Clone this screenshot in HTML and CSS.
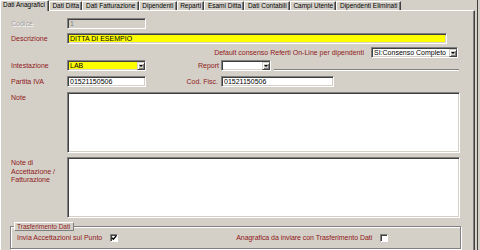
FILE: index.html
```html
<!DOCTYPE html>
<html lang="it">
<head>
  <meta charset="UTF-8" />
  <title>Anagrafica Ditta</title>
  <link rel="stylesheet" href="styles.css">
</head>
<body>
  <div class="window">
    <ul class="tabs">
      <li class="active">Dati Anagrafici</li>
      <li>Dati Ditta</li>
      <li>Dati Fatturazione</li>
      <li>Dipendenti</li>
      <li>Reparti</li>
      <li>Esami Ditta</li>
      <li>Dati Contabili</li>
      <li>Campi Utente</li>
      <li>Dipendenti Eliminati</li>
    </ul>

    <div class="panel">
      <div class="row">
        <span class="lbl off">Codice</span>
        <input class="field off w79" value="1" disabled>
      </div>

      <div class="row gap4">
        <span class="lbl">Descrizione</span>
        <input class="field yellow w380" value="DITTA DI ESEMPIO">
      </div>

      <div class="row gap3 right">
        <span class="lbl-inline">Default consenso Referti On-Line per dipendenti</span>
        <div class="field select w87"><span>SI:Consenso Completo</span><span class="arrow"></span></div>
      </div>

      <div class="row gap2">
        <span class="lbl">Intestazione</span>
        <div class="field select yellow w79"><span>LAB</span><span class="arrow"></span></div>
        <span class="lbl2">Report</span>
        <div class="field select w50"><span></span><span class="arrow"></span></div>
        <span class="sep"></span>
      </div>

      <div class="row gap5">
        <span class="lbl">Partita IVA</span>
        <input class="field w79" value="01521150506">
        <span class="lbl2 cf">Cod. Fisc.</span>
        <input class="field w113" value="01521150506">
      </div>

      <div class="row tall gap5">
        <span class="lbl">Note</span>
        <textarea class="field area"></textarea>
      </div>

      <div class="row tall gap4">
        <span class="lbl">Note di Accettazione / Fatturazione</span>
        <textarea class="field area"></textarea>
      </div>

      <fieldset class="group">
        <legend>Trasferimento Dati</legend>
        <div class="group-row">
          <span class="lbl-g">Invia Accettazioni sul Punto</span>
          <span class="check">
            <svg width="6" height="6" viewBox="0 0 6 6"><polyline points="0.8,2.6 2.3,4.2 5.2,1" fill="none" stroke="#000" stroke-width="1.3"/></svg>
          </span>
          <span class="lbl-g far">Anagrafica da inviare con Trasferimento Dati</span>
          <span class="check"></span>
        </div>
      </fieldset>
    </div>
  </div>
</body>
</html>
```

FILE: styles.css
```css
* {
  box-sizing: border-box;
  margin: 0;
  padding: 0;
}

body {
  font-family: "Liberation Sans", Arial, sans-serif;
  font-size: 7px;
  background-color: #d4d0c8;
  color: #000;
}

.window {
  width: 478px;
  height: 250px;
  border-right: 1px solid #404040;
  overflow: hidden;
}

/* tab strip */
.tabs {
  display: flex;
  align-items: flex-end;
  list-style: none;
  height: 10px;
  position: relative;
  z-index: 1;
}

.tabs li {
  height: 9px;
  line-height: 8px;
  padding: 0 2.3px 0 2.5px;
  font-size: 6.5px;
  white-space: nowrap;
  border: 1px solid;
  border-color: #fff #404040 transparent #fff;
  border-bottom: none;
  box-shadow: inset -1px 0 #808080;
}

.tabs li.active {
  height: 11px;
  margin-bottom: -1px;
  padding: 0 3px 0 2px;
  background-color: #d4d0c8;
}

/* page */
.panel {
  width: 475px;
  height: 240px;
  border-top: 1px solid #fff;
  border-left: 1px solid #fff;
  border-right: 1px solid #404040;
  box-shadow: inset -1px 0 #808080;
  padding-top: 7px;
}

.row {
  display: flex;
  align-items: center;
  height: 11px;
  padding-left: 10px;
}

.row.gap2 { margin-top: 2px; }
.row.gap3 { margin-top: 3px; }
.row.gap4 { margin-top: 4px; }
.row.gap5 { margin-top: 5px; }

.row.right {
  justify-content: flex-end;
  padding-right: 16px;
}

.row.tall {
  height: 61px;
  align-items: flex-start;
}

.lbl {
  width: 56px;
  flex-shrink: 0;
  color: #901818;
}

.row.tall .lbl {
  padding-top: 2px;
  line-height: 8.5px;
}

.lbl.off {
  color: #a0a0a0;
  text-shadow: 1px 1px #fff;
}

.lbl-inline {
  color: #901818;
  margin-right: 7px;
}

.lbl2 {
  width: 75px;
  text-align: right;
  padding-right: 2px;
  color: #901818;
}

.lbl2.cf {
  padding-right: 3px;
}

/* sunken controls */
.field {
  height: 11px;
  border: 1px solid;
  border-color: #808080 #fff #fff #808080;
  box-shadow: inset 1px 1px #404040, inset -1px -1px #d4d0c8;
  background-color: #fff;
  padding: 0 2px;
  font: inherit;
  line-height: 9px;
  color: #000;
  outline: none;
}

.field.yellow { background-color: #ffff00; }

.field.off {
  background-color: #d4d0c8;
  color: #808080;
}

.w50 { width: 50px; }
.w79 { width: 79px; }
.w87 { width: 87px; }
.w113 { width: 113px; }
.w380 { width: 380px; }

.area {
  width: 393px;
  height: 61px;
  resize: none;
}

.select {
  display: flex;
  align-items: flex-end;
  justify-content: space-between;
  padding: 0 0 0 2px;
}

.select span:first-child {
  align-self: center;
}

.arrow {
  display: flex;
  align-items: center;
  justify-content: center;
  width: 8px;
  height: 8px;
  border: 1px solid;
  border-color: #d4d0c8 #404040 #404040 #d4d0c8;
  box-shadow: inset 1px 1px #fff, inset -1px -1px #808080;
  background-color: #d4d0c8;
}

.arrow::after {
  content: "";
  border-left: 2px solid transparent;
  border-right: 2px solid transparent;
  border-top: 2px solid #000;
}

.sep {
  flex: 1;
  align-self: flex-end;
  margin: 0 15px 0 3px;
  height: 2px;
  border-top: 1px solid #808080;
  border-bottom: 1px solid #fff;
}

/* group box */
.group {
  margin: 4px 13px 0 9px;
  padding: 0 3px 5px 3px;
  min-inline-size: 0;
  border: 1px solid #808080;
  box-shadow: inset 1px 1px #fff, 1px 1px #fff;
}

.group legend {
  font-size: 6.5px;
  line-height: 7px;
  padding: 0 3px 0 2px;
  color: #901818;
  border: 1px solid;
  border-color: #fff #808080 #808080 #fff;
  background-color: #d4d0c8;
}

.group-row {
  display: flex;
  align-items: center;
  height: 11px;
  margin-top: 1px;
  padding-left: 3px;
}

.lbl-g {
  color: #901818;
}

.lbl-g.far {
  margin-left: 118px;
  letter-spacing: -0.05px;
}

.check {
  display: flex;
  align-items: center;
  justify-content: center;
  width: 8px;
  height: 8px;
  margin-left: 8px;
  border: 1px solid;
  border-color: #808080 #fff #fff #808080;
  box-shadow: inset 1px 1px #404040;
  background-color: #fff;
}
```
